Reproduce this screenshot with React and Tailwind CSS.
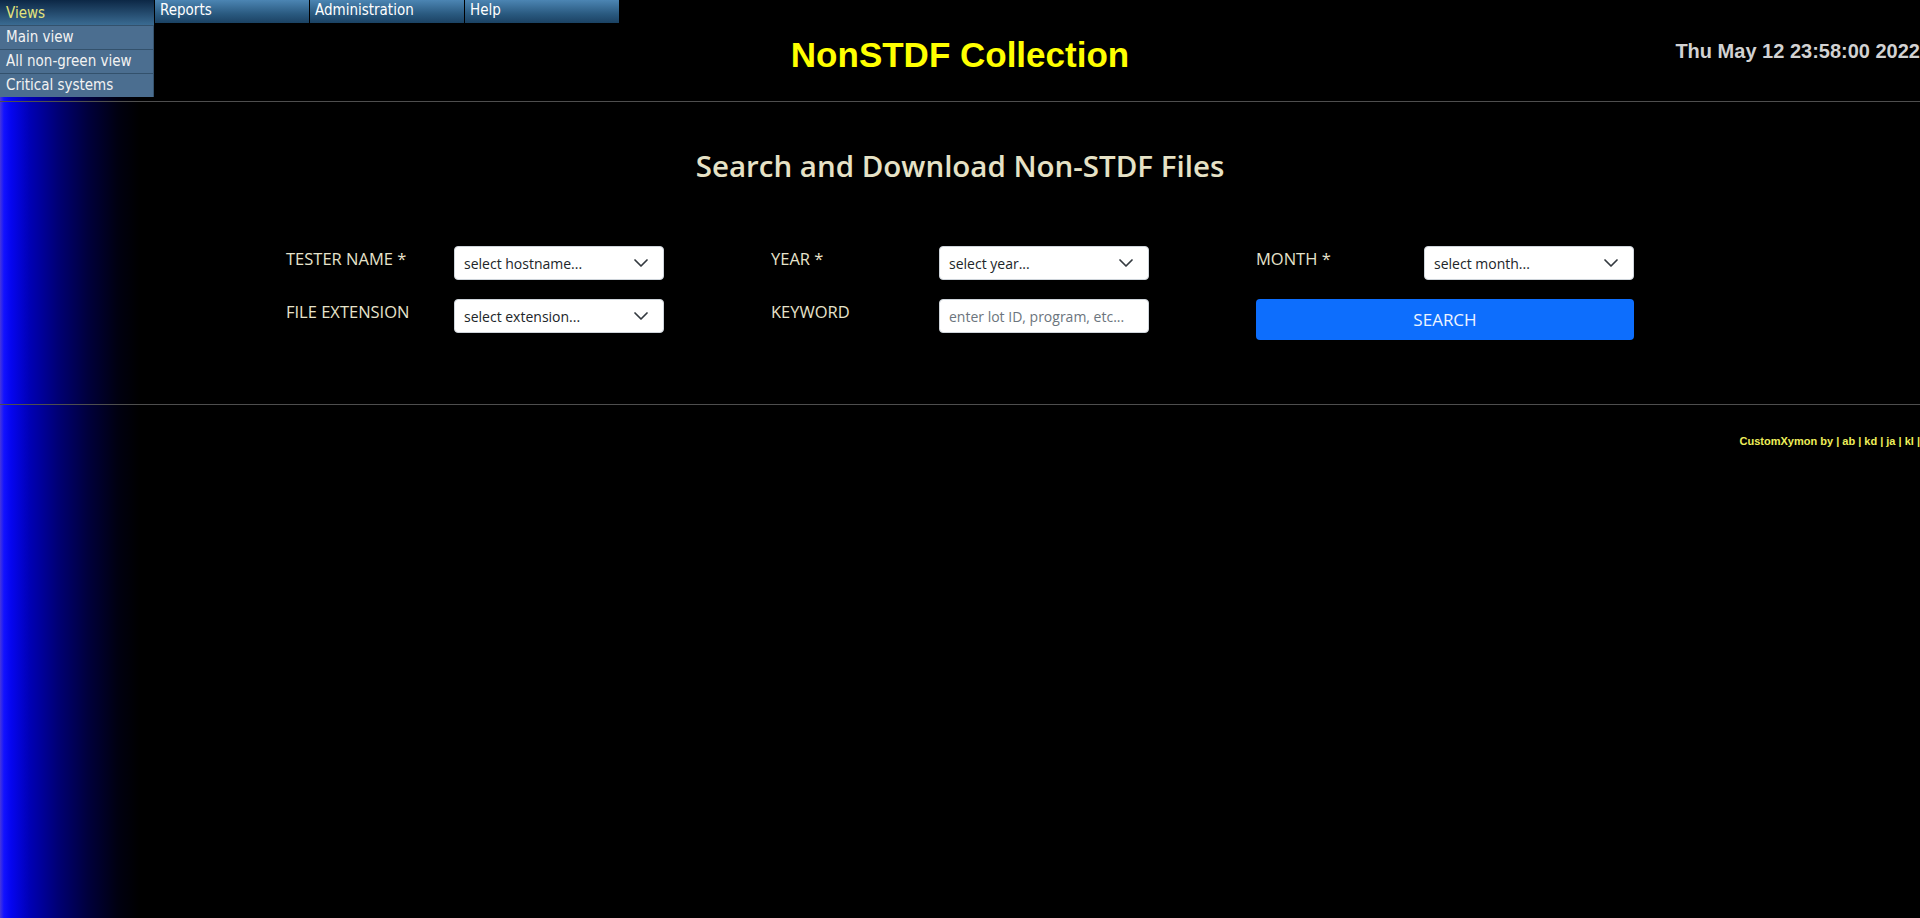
import React from "react";

const MENU = ["Reports", "Administration", "Help"];
const VIEWS = ["Main view", "All non-green view", "Critical systems"];

function Chevron() {
  return (
    <svg viewBox="0 0 16 16" className="h-[16px] w-[16px] shrink-0" fill="none">
      <path d="m2 5 6 6 6-6" stroke="#343a40" strokeWidth="1.75" strokeLinecap="round" strokeLinejoin="round" />
    </svg>
  );
}

function SelectBox({ text }) {
  return (
    <div className="flex h-[34px] w-[210px] items-center justify-between rounded-[4px] border border-[#ced4da] bg-white pl-[9px] pr-[14px] text-[14px] text-[#212529]">
      <span>{text}</span>
      <Chevron />
    </div>
  );
}

function Field({ label, children }) {
  return (
    <div className="flex items-start">
      <label className="w-[168px] shrink-0 pt-px text-[16.5px] leading-6 text-[#e7e3cb]">{label}</label>
      {children}
    </div>
  );
}

export default function App() {
  return (
    <div className="min-h-screen bg-black bg-[linear-gradient(to_right,#4636dc_0px,#1212ff_4px,#0505f0_11px,#0000b4_30px,#000074_58px,#00003c_88px,#000010_118px,#000_140px)] font-['Open_Sans',sans-serif]">
      <header className="relative grid h-[102px] grid-cols-[1fr_auto_1fr] items-center border-b border-[#4e4e4e]">
        <nav className="absolute left-0 top-0 z-10 flex items-start font-['DejaVu_Sans_Condensed','DejaVu_Sans',sans-serif] text-[15px]">
          <div className="w-[154px]">
            <div className="h-[25px] bg-[linear-gradient(to_bottom,#0c2745,#3a6b92)] pl-[6px] leading-[26px] text-[#e4e47c]">Views</div>
            <ul className="border-r border-[#36536e] bg-[#4b6e90]">
              {VIEWS.map((v) => (
                <li key={v} className="h-[24px] border-t border-[#33516c] pl-[6px] leading-[23px] text-[#f2f2f2]">
                  {v}
                </li>
              ))}
            </ul>
          </div>
          {MENU.map((m) => (
            <div
              key={m}
              className="ml-px h-[23px] w-[154px] bg-[linear-gradient(to_bottom,#4c85b3,#2a5a80_60%,#1b4263)] pl-[5px] leading-[21px] text-white"
            >
              {m}
            </div>
          ))}
        </nav>
        <div />
        <h1 className="pt-[7px] font-['Liberation_Sans',Arial,sans-serif] text-[35px] font-bold leading-none text-[#ffff00]">
          NonSTDF Collection
        </h1>
        <div className="justify-self-end font-['Liberation_Sans',Arial,sans-serif] text-[20px] font-bold leading-none text-[#d2d2d2]">
          Thu May 12 23:58:00 2022
        </div>
      </header>

      <main className="border-b border-[#4e4e4e] pb-[64px] pt-[47px]">
        <h2 className="text-center text-[29.5px] font-semibold leading-[34px] text-[#e6e2c6]">
          Search and Download Non-STDF Files
        </h2>
        <div className="mx-auto mt-[63px] grid w-[1348px] grid-cols-3 gap-x-[107px] gap-y-[19px]">
          <Field label="TESTER NAME *">
            <SelectBox text="select hostname..." />
          </Field>
          <Field label="YEAR *">
            <SelectBox text="select year..." />
          </Field>
          <Field label="MONTH *">
            <SelectBox text="select month..." />
          </Field>
          <Field label="FILE EXTENSION">
            <SelectBox text="select extension..." />
          </Field>
          <Field label="KEYWORD">
            <input
              type="text"
              placeholder="enter lot ID, program, etc..."
              className="h-[34px] w-[210px] rounded-[4px] border border-[#ced4da] bg-white pl-[9px] pr-[6px] text-[14px] text-[#212529] outline-none placeholder:text-[#6c757d]"
            />
          </Field>
          <button className="h-[41px] w-full rounded-[4px] bg-[#0d6efd] text-[17px] text-[#eef4ff]">SEARCH</button>
        </div>
      </main>

      <footer className="pt-[30px] text-right font-['Liberation_Sans',Arial,sans-serif] text-[11px] font-bold leading-[13px] text-[#eeee5a]">
        CustomXymon by | ab | kd | ja | kl |
      </footer>
    </div>
  );
}
